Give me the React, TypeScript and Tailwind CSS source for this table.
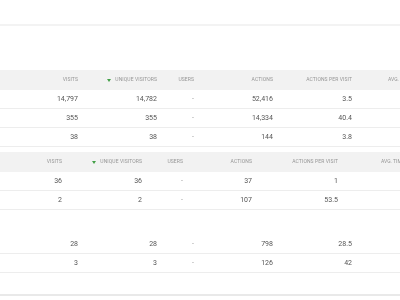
const font = { fontFamily: "Roboto, 'Liberation Sans', sans-serif" };

type Cols = { widths: string; avgLeft: string };

const wide: Cols = { widths: "grid-cols-[84px_79px_37px_79px_79px_1fr]", avgLeft: "pl-[30px]" };
const narrow: Cols = { widths: "grid-cols-[68px_80px_41px_69px_86px_1fr]", avgLeft: "pl-[37px]" };

function SortArrow() {
  return (
    <svg width="4" height="3" viewBox="0 0 4 3" className="mr-[4px] inline-block">
      <path d="M0 0 L4 0 L2 3 Z" fill="#43a047" />
    </svg>
  );
}

function Header({ cols }: { cols: Cols }) {
  const cell = "flex items-center justify-end pr-[6px] text-[5px] uppercase tracking-[0.1px] text-[#959595] whitespace-nowrap";
  return (
    <div className={`grid ${cols.widths} h-[20px] bg-[#f2f2f2]`}>
      <div className={cell}>Visits</div>
      <div className={cell}>
        <SortArrow />
        Unique Visitors
      </div>
      <div className={cell}>Users</div>
      <div className={cell}>Actions</div>
      <div className={cell}>Actions per visit</div>
      <div className={`flex items-center ${cols.avgLeft} text-[5px] uppercase text-[#959595] whitespace-nowrap overflow-hidden`}>
        Avg. Time on Website
      </div>
    </div>
  );
}

function Row({ cols, values }: { cols: Cols; values: string[] }) {
  const cell = "flex items-center justify-end pr-[6px] text-[7px] text-[#555]";
  return (
    <div className={`grid ${cols.widths} h-[19px] border-b border-[#ededed]`}>
      {values.map((v, i) => (
        <div key={i} className={`${cell} ${v === "-" ? "text-[#999]" : ""}`}>
          {v}
        </div>
      ))}
      <div />
    </div>
  );
}

export default function App() {
  return (
    <div className="w-[400px] h-[300px] overflow-hidden will-change-transform" style={font}>
      <div className="h-[24px]" />
      <div className="h-[2px] bg-[#f3f3f3]" />
      <div className="h-[44px]" />

      <Header cols={wide} />
      <Row cols={wide} values={["14,797", "14,782", "-", "52,416", "3.5"]} />
      <Row cols={wide} values={["355", "355", "-", "14,334", "40.4"]} />
      <Row cols={wide} values={["38", "38", "-", "144", "3.8"]} />
      <div className="h-[5px]" />

      <Header cols={narrow} />
      <Row cols={narrow} values={["36", "36", "-", "37", "1"]} />
      <Row cols={narrow} values={["2", "2", "-", "107", "53.5"]} />
      <div className="h-[25px]" />

      <Row cols={wide} values={["28", "28", "-", "798", "28.5"]} />
      <Row cols={wide} values={["3", "3", "-", "126", "42"]} />
      <div className="h-[21px]" />
      <div className="h-[2px] bg-[#e9e9e9]" />
    </div>
  );
}
